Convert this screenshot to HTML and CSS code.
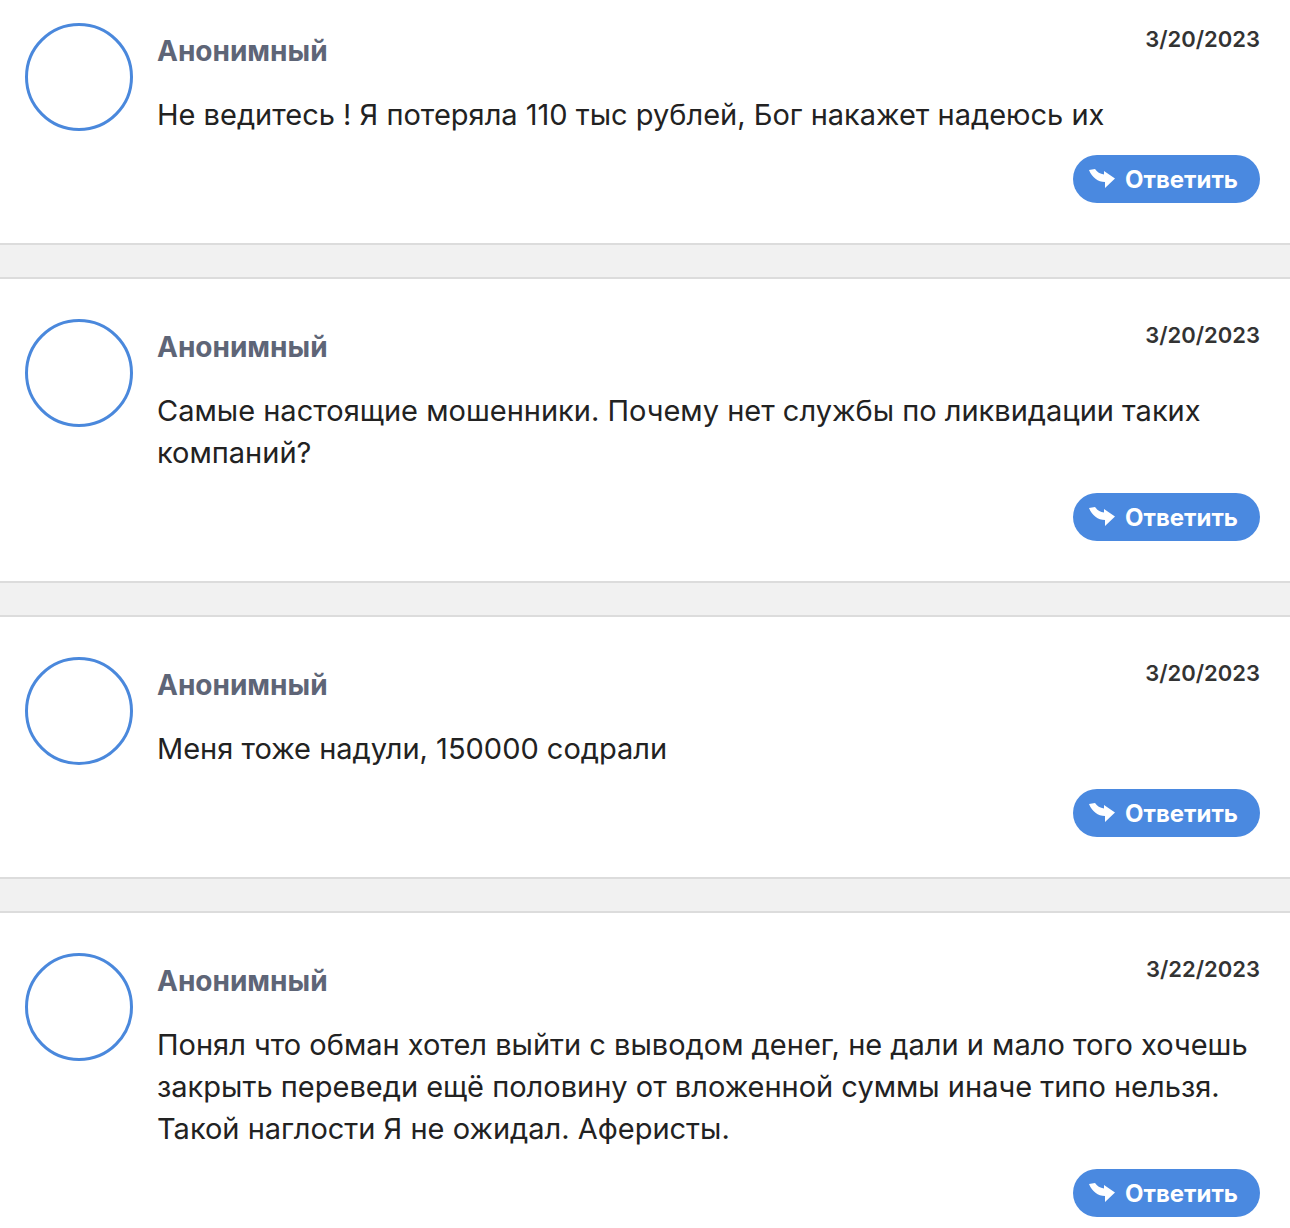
FILE: index.html
```html
<!DOCTYPE html>
<html lang="ru">
<head>
    <meta charset="UTF-8">
    <meta name="viewport" content="width=device-width, initial-scale=1.0">
    <title>Отзывы</title>
    <link rel="stylesheet" href="styles.css">
</head>
<body>

    <div class="comments">

        <div class="comment">
            <div class="avatar"></div>
            <div class="comment-body">
                <div class="comment-head">
                    <span class="author">Анонимный</span>
                    <span class="date">3/20/2023</span>
                </div>
                <p class="text">Не ведитесь ! Я потеряла 110 тыс рублей, Бог накажет надеюсь их</p>
                <div class="actions">
                    <button type="button" class="reply-button">
                        <svg class="reply-icon" viewBox="0 0 27 22"><path d="M0 2L6 1C8 4 11 6 15 6.5L15 3L26 10.5L16 20L16 14C9 14 3 9.5 0 2Z"/></svg>
                        Ответить
                    </button>
                </div>
            </div>
        </div>

        <div class="comment">
            <div class="avatar"></div>
            <div class="comment-body">
                <div class="comment-head">
                    <span class="author">Анонимный</span>
                    <span class="date">3/20/2023</span>
                </div>
                <p class="text">Самые настоящие мошенники. Почему нет службы по ликвидации таких компаний?</p>
                <div class="actions">
                    <button type="button" class="reply-button">
                        <svg class="reply-icon" viewBox="0 0 27 22"><path d="M0 2L6 1C8 4 11 6 15 6.5L15 3L26 10.5L16 20L16 14C9 14 3 9.5 0 2Z"/></svg>
                        Ответить
                    </button>
                </div>
            </div>
        </div>

        <div class="comment">
            <div class="avatar"></div>
            <div class="comment-body">
                <div class="comment-head">
                    <span class="author">Анонимный</span>
                    <span class="date">3/20/2023</span>
                </div>
                <p class="text">Меня тоже надули, 150000 содрали</p>
                <div class="actions">
                    <button type="button" class="reply-button">
                        <svg class="reply-icon" viewBox="0 0 27 22"><path d="M0 2L6 1C8 4 11 6 15 6.5L15 3L26 10.5L16 20L16 14C9 14 3 9.5 0 2Z"/></svg>
                        Ответить
                    </button>
                </div>
            </div>
        </div>

        <div class="comment">
            <div class="avatar"></div>
            <div class="comment-body">
                <div class="comment-head">
                    <span class="author">Анонимный</span>
                    <span class="date">3/22/2023</span>
                </div>
                <p class="text">Понял что обман хотел выйти с выводом денег, не дали и мало того хочешь закрыть переведи ещё половину от вложенной суммы иначе типо нельзя. Такой наглости Я не ожидал. Аферисты.</p>
                <div class="actions">
                    <button type="button" class="reply-button">
                        <svg class="reply-icon" viewBox="0 0 27 22"><path d="M0 2L6 1C8 4 11 6 15 6.5L15 3L26 10.5L16 20L16 14C9 14 3 9.5 0 2Z"/></svg>
                        Ответить
                    </button>
                </div>
            </div>
        </div>

    </div>

</body>
</html>
```

FILE: styles.css
```css
body {
    margin: 0;
    font-family: Inter, "Liberation Sans", Arial, sans-serif;
    color: #222;
    background: #fff;
    overflow: hidden;
}
.comments {
    display: flex;
    flex-direction: column;
    gap: 32px;
    background: #f1f1f1;
    margin-top: -19px; /* first comment is cut off by the viewport */
}
.comment {
    display: flex;
    gap: 24px;
    padding: 40px 30px 40px 25px;
    background: #fff;
    border-top: 2px solid #dcdcdc;
    border-bottom: 2px solid #dcdcdc;
}
.avatar {
    flex: none;
    width: 102px;
    height: 102px;
    border: 3px solid #4a88dc;
    border-radius: 50%;
}
.comment-body {
    flex: 1;
    min-width: 0;
}
.comment-head {
    display: flex;
    justify-content: space-between;
    align-items: flex-start;
}
.author {
    margin-top: 12px;
    font-size: 28px;
    line-height: 32px;
    font-weight: bold;
    color: #5e6577;
}
.date {
    margin-top: 2px;
    font-size: 22px;
    line-height: 28px;
    font-weight: 600;
    color: #333;
}
.text {
    margin: 27px 0 0;
    font-size: 29px;
    line-height: 42px;
}
.actions {
    display: flex;
    justify-content: flex-end;
    margin-top: 19px;
}
.reply-button {
    display: flex;
    align-items: center;
    gap: 10px;
    height: 48px;
    padding: 0 22px 0 16px;
    border: none;
    border-radius: 24px;
    background: #4a89e0;
    color: #fff;
    font-family: inherit;
    font-size: 24px;
    font-weight: bold;
    cursor: pointer;
}
.reply-icon {
    width: 27px;
    height: 22px;
    margin-right: -1px;
    fill: #fff;
}
```
